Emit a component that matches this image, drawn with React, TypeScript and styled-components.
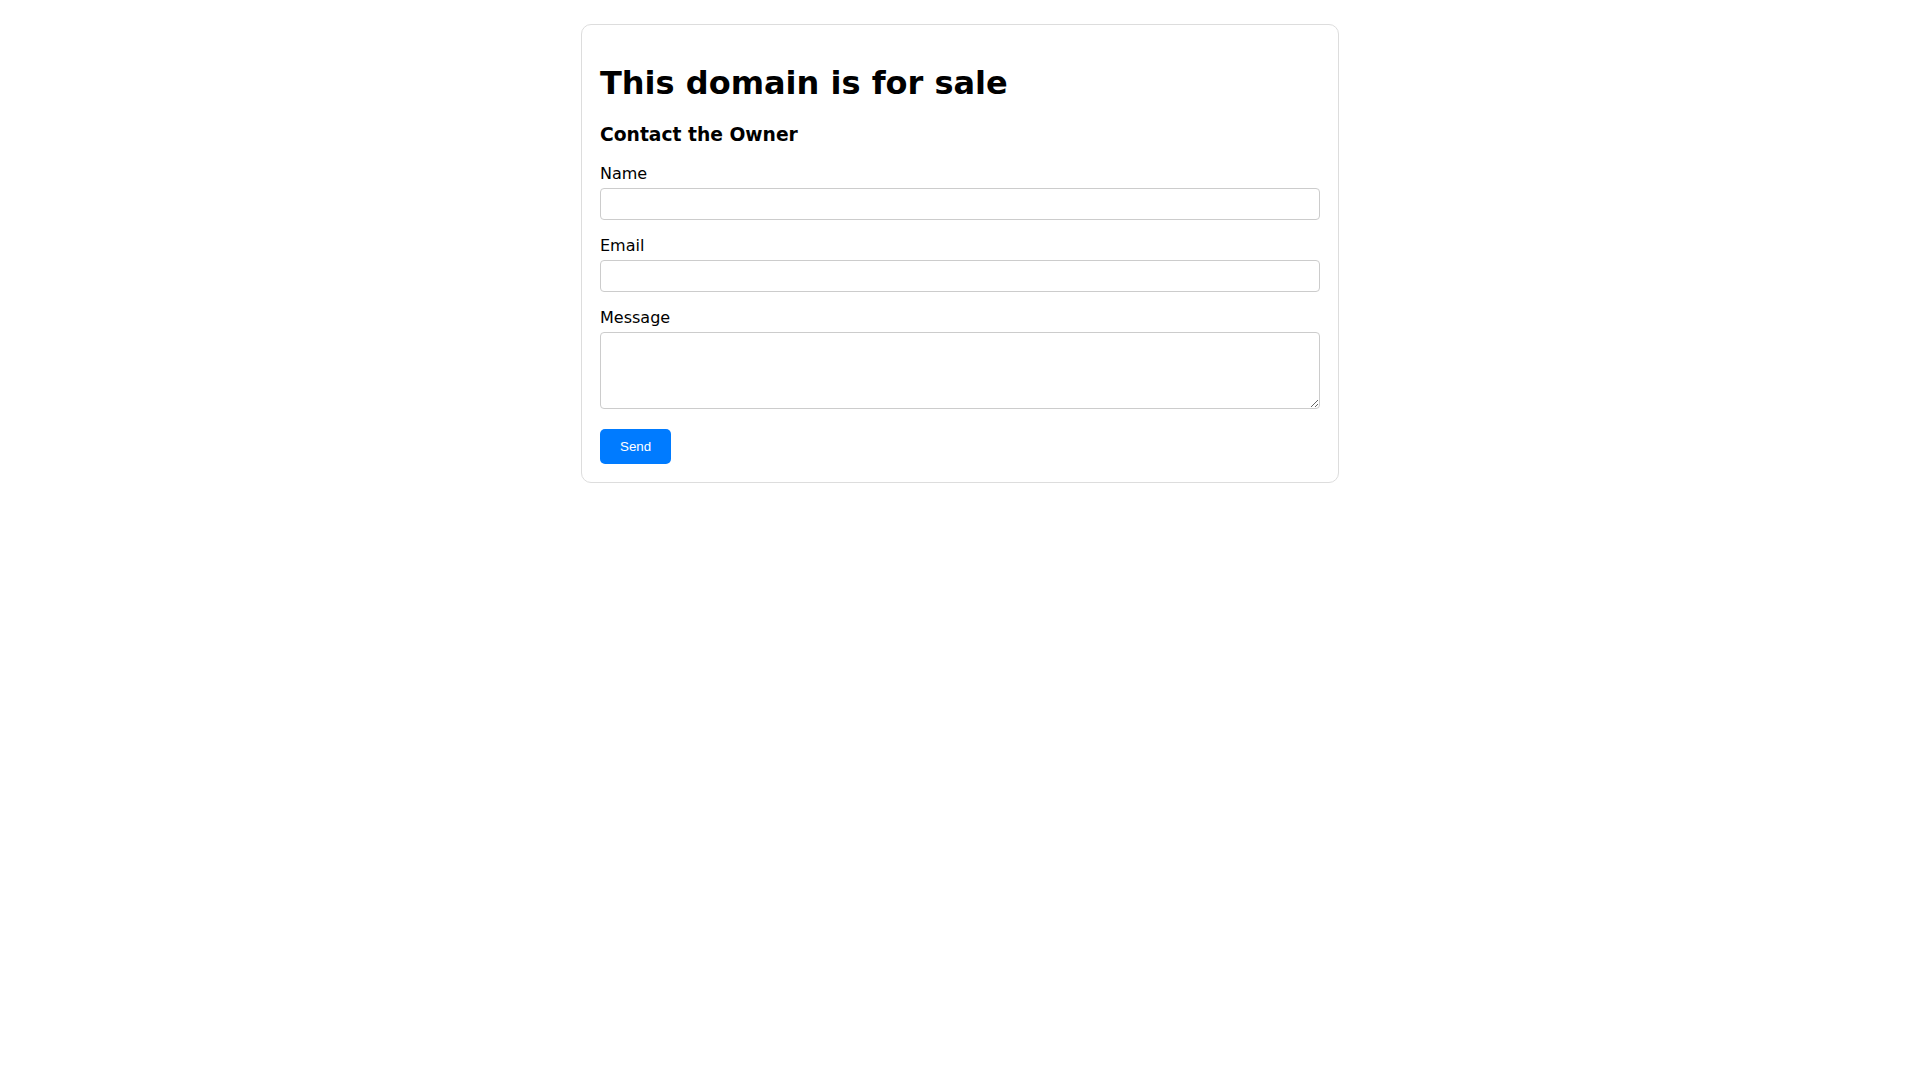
import React from 'react'
import styled, { createGlobalStyle } from 'styled-components'

const Global = createGlobalStyle`
  html, body {
    margin: 0;
    background: #fff;
  }
  body {
    font-family: 'DejaVu Sans', 'Liberation Sans', sans-serif;
    color: #000;
  }
`

const Card = styled.div`
  max-width: 720px;
  margin: 24px auto;
  padding: 18px;
  border: 1px solid #ddd;
  border-radius: 10px;
`

const Title = styled.h1`
  font-size: 32px;
  font-weight: bold;
  margin: 21.44px 0;
`

const Subtitle = styled.h3`
  font-size: 18.72px;
  font-weight: bold;
  margin: 18.72px 0;
`

const Form = styled.form`
  display: flex;
  flex-direction: column;
`

const Label = styled.label`
  display: block;
  font-size: 16px;
  margin-bottom: 5px;
`

const Input = styled.input`
  display: block;
  box-sizing: border-box;
  width: 100%;
  height: 32px;
  padding: 0 8px;
  margin: 0 0 16px;
  border: 1px solid #ccc;
  border-radius: 4px;
  font-family: 'DejaVu Sans', sans-serif;
  font-size: 14px;
  outline: none;
`

const TextArea = styled.textarea`
  display: block;
  box-sizing: border-box;
  width: 100%;
  height: 77px;
  padding: 8px;
  margin: 0 0 20.5px;
  border: 1px solid #ccc;
  border-radius: 4px;
  font-family: 'DejaVu Sans', sans-serif;
  font-size: 14px;
  outline: none;
`

const Button = styled.button`
  align-self: flex-start;
  padding: 10px 20px;
  border: none;
  border-radius: 5px;
  background: #007bff;
  color: #fff;
  font-family: 'Liberation Sans', Arial, sans-serif;
  font-size: 13.333px;
  cursor: pointer;
`

const fields: { id: string; label: string; multiline?: boolean }[] = [
  { id: 'name', label: 'Name' },
  { id: 'email', label: 'Email' },
  { id: 'message', label: 'Message', multiline: true },
]

export default () => {
  return (
    <>
      <Global />
      <Card>
        <Title>This domain is for sale</Title>
        <Subtitle>Contact the Owner</Subtitle>
        <Form onSubmit={(e) => e.preventDefault()}>
          {fields.map(({ id, label, multiline }) => (
            <React.Fragment key={id}>
              <Label htmlFor={id}>{label}</Label>
              {multiline ? <TextArea id={id} rows={4} /> : <Input id={id} type={id === 'email' ? 'email' : 'text'} />}
            </React.Fragment>
          ))}
          <Button type="submit">Send</Button>
        </Form>
      </Card>
    </>
  )
}
